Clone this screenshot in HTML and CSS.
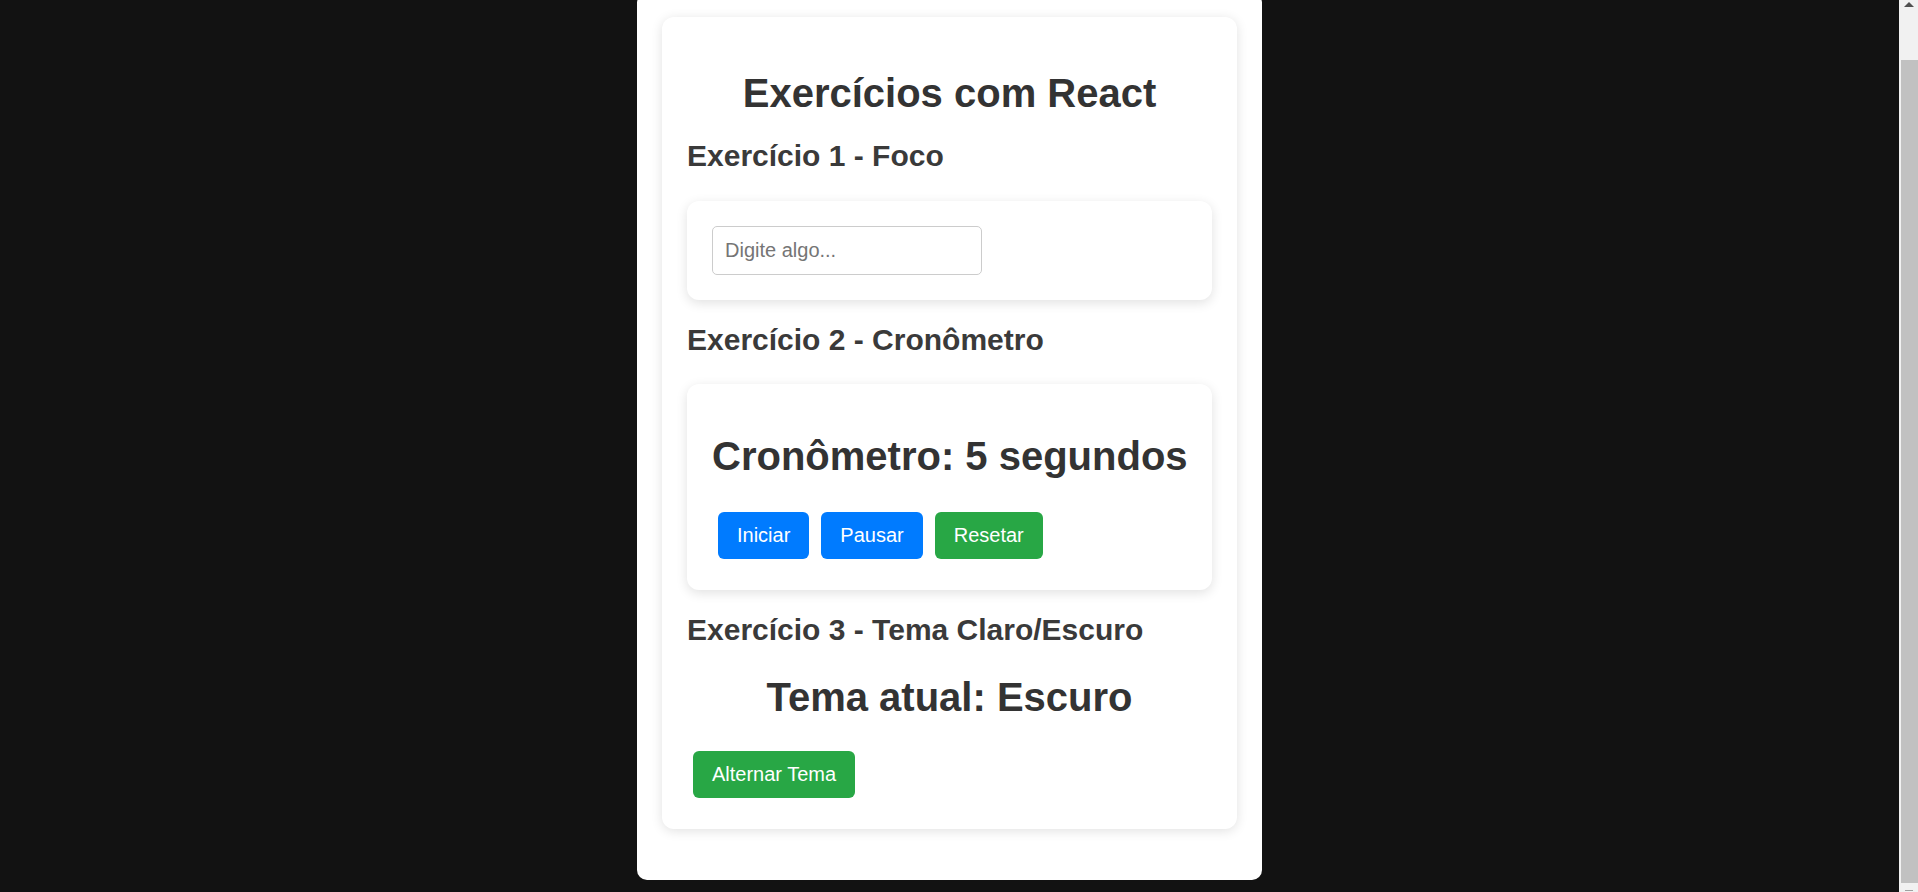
FILE: index.html
```html
<!DOCTYPE html>
<html lang="pt-BR">
<head>
<meta charset="utf-8">
<title>Exercícios com React</title>
<link rel="stylesheet" href="styles.css">
</head>
<body>
<div class="root">
  <div class="app">
    <h1 class="title">Exercícios com React</h1>

    <h2 class="section-title">Exercício 1 - Foco</h2>
    <div class="card">
      <input class="text-input" type="text" placeholder="Digite algo...">
    </div>

    <h2 class="section-title">Exercício 2 - Cronômetro</h2>
    <div class="card">
      <h1 class="big timer">Cronômetro: 5 segundos</h1>
      <div class="btn-row">
        <button class="btn btn-blue">Iniciar</button><button class="btn btn-blue">Pausar</button><button class="btn btn-green">Resetar</button>
      </div>
    </div>

    <h2 class="section-title">Exercício 3 - Tema Claro/Escuro</h2>
    <div class="theme">
      <h1 class="big center">Tema atual: Escuro</h1>
      <button class="btn btn-green">Alternar Tema</button>
    </div>
  </div>
</div>
<div class="scrollbar">
  <div class="sb-arrow-up"></div>
  <div class="sb-thumb"></div>
  <div class="sb-arrow-down"></div>
</div>
<script src="script.js"></script>
</body>
</html>
```

FILE: styles.css
```css
html {
  background: #121212;
}
body {
  margin: 0;
  padding: 12px 19px 12px 0;
  background: #121212;
  font-family: "Liberation Sans", Arial, sans-serif;
  color: #333;
}
.root {
  width: 625px;
  box-sizing: border-box;
  margin: 0 auto;
  background: #fff;
  border-radius: 10px;
  padding: 25px 25px 51px;
}
.app {
  background: #fff;
  border-radius: 12px;
  padding: 25px;
  box-shadow: 0 2px 12px rgba(0, 0, 0, 0.12);
}
h1 {
  font-size: 40px;
  margin: 26px 0 25px;
  font-weight: bold;
  white-space: nowrap;
}
.title {
  text-align: center;
  margin-top: 29px;
}
.timer {
  margin-top: 25px;
  margin-bottom: 27px;
}
.center {
  text-align: center;
}
.section-title {
  font-size: 30px;
  line-height: 30px;
  margin: 25px 0 29.5px;
  color: #3a3a3a;
}
.card {
  background: #fff;
  border-radius: 12px;
  padding: 25px;
  box-shadow: 0 3px 12px rgba(0, 0, 0, 0.12);
}
.text-input {
  width: 270px;
  box-sizing: border-box;
  padding: 12px;
  font-size: 20px;
  font-family: "Liberation Sans", Arial, sans-serif;
  border: 1px solid #ccc;
  border-radius: 5px;
  color: #333;
  display: block;
}
.text-input::placeholder {
  color: #757575;
}
.btn-row {
  display: flex;
}
.btn {
  font-family: "Liberation Sans", Arial, sans-serif;
  font-size: 20px;
  padding: 12px 19px;
  margin: 6px;
  border: none;
  border-radius: 6px;
  color: #fff;
  cursor: pointer;
  line-height: 23px;
}
.btn-blue {
  background: #007bff;
}
.btn-green {
  background: #28a745;
}

/* imitation of the browser's vertical scrollbar */
.scrollbar {
  position: fixed;
  top: 0;
  right: 0;
  bottom: 0;
  width: 19px;
  background: #f1f1f1;
}
.sb-thumb {
  position: absolute;
  top: 60px;
  bottom: 9px;
  left: 2px;
  right: 0;
  background: #c1c1c1;
}
.sb-arrow-up {
  position: absolute;
  top: 2px;
  left: 5px;
  width: 0;
  height: 0;
  border-left: 5px solid transparent;
  border-right: 5px solid transparent;
  border-bottom: 5px solid #505050;
}
.sb-arrow-down {
  position: absolute;
  bottom: 1px;
  left: 6px;
  width: 8px;
  height: 1px;
  background: #a0a0a0;
}
```

FILE: script.js
```js
window.scrollTo(0, document.documentElement.scrollHeight);
window.addEventListener('load', function () {
  window.scrollTo(0, document.documentElement.scrollHeight);
});
```
